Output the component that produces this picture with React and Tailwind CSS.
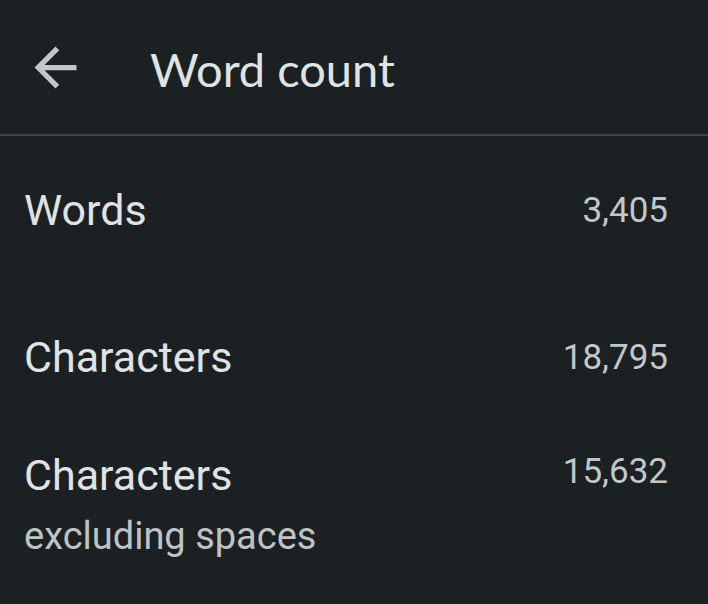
export default function App() {
  return (
    <div className="w-[708px] h-[604px] bg-[#1b2122] overflow-hidden" style={{ fontFamily: 'Roboto, "Noto Sans", sans-serif' }}>
      <div className="h-[134px] flex items-center">
        <button className="ml-[24px] w-[63px] h-[63px] flex items-center justify-center text-[#c4c7c9]">
          <svg viewBox="0 0 24 24" width="63" height="63" fill="currentColor">
            <path d="M20 11H7.83l5.59-5.59L12 4l-8 8 8 8 1.41-1.41L7.83 13H20v-2z" />
          </svg>
        </button>
        <h1
          className="ml-[63px] mt-[5px] text-[47px] leading-none text-[#dfe3e4]"
          style={{ fontFamily: 'Lato, "Open Sans", sans-serif' }}
        >
          Word count
        </h1>
      </div>
      <div className="h-[2px] bg-[#3f4648]" />

      <div className="pl-[24px] pr-[40px] pt-[52px]">
        <div className="flex items-center justify-between h-[44px]">
          <span className="text-[43px] leading-none text-[#e0e3e3]">Words</span>
          <span className="text-[35px] leading-none text-[#c2c7c8]">3,405</span>
        </div>

        <div className="flex items-center justify-between h-[44px] mt-[103px]">
          <span className="text-[43px] leading-none text-[#e0e3e3]">Characters</span>
          <span className="text-[35px] leading-none text-[#c2c7c8]">18,795</span>
        </div>

        <div className="flex items-start justify-between mt-[75px]">
          <div className="flex flex-col">
            <span className="text-[43px] leading-none text-[#e0e3e3]">Characters</span>
            <span className="mt-[20px] text-[38px] leading-none text-[#bfc3c5]">excluding spaces</span>
          </div>
          <span className="text-[35px] leading-none text-[#c2c7c8]">15,632</span>
        </div>
      </div>
    </div>
  );
}
